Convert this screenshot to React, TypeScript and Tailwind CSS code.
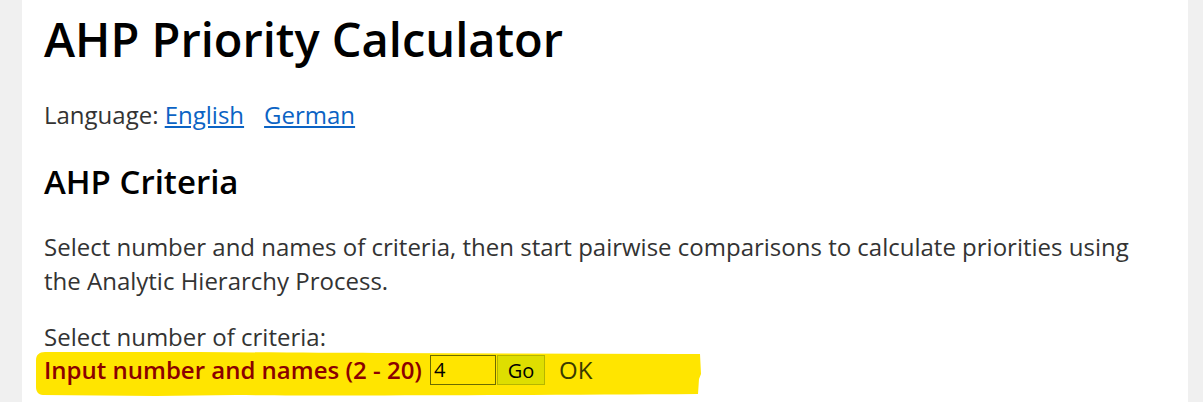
export default function App() {
  return (
    <div className="min-h-[402px] bg-[#f0f0f0] font-['Open_Sans',sans-serif]">
      <div className="ml-[22px] w-[1166px] min-h-[402px] bg-white pl-[22px] pr-[36px] text-[#333]">
        <h1 className="pt-[7px] text-[47px] leading-[64px] font-semibold text-black">
          AHP Priority Calculator
        </h1>
        <p className="mt-[27px] text-[24px] leading-[34px]">
          Language:{" "}
          <a href="#" className="text-[#0b63c4] underline">English</a>
          <span className="ml-5" />
          <a href="#" className="text-[#0b63c4] underline">German</a>
        </p>
        <h2 className="mt-[28px] text-[33px] leading-[44px] font-semibold text-black">
          AHP Criteria
        </h2>
        <p className="mt-[26px] text-[24px] leading-[34px]">
          Select number and names of criteria, then start pairwise comparisons to calculate priorities using
          the Analytic Hierarchy Process.
        </p>
        <p className="mt-[22px] text-[24px] leading-[33px]">Select number of criteria:</p>
        <div className="relative">
          <svg
            className="absolute left-[-8px] top-[-1px]"
            width="666"
            height="45"
            viewBox="0 0 666 45"
          >
            <path
              d="M9 0 C120 -1 250 1 340 1 L640 2 L664 2 L665 22 L663 27 L662 42 C500 43 300 44 200 43 L120 44 L7 43 C2 43 0 39 0 35 L0 8 C0 3 3 0 9 0 Z"
              fill="#ffe500"
            />
          </svg>
          <div className="relative flex items-center h-[33px] text-[24px]">
            <span className="font-semibold text-[#8b0000]">Input number and names (2 - 20)</span>
            <input
              defaultValue="4"
              className="ml-[8px] h-[30px] w-[66px] border border-[#6b6b00] bg-transparent px-[3px] text-[20px] text-black outline-none"
            />
            <button className="ml-px h-[30px] w-[48px] border border-[#b5b500] bg-[#dede00] text-[20px] text-black">
              Go
            </button>
            <span className="ml-[14px] text-[#3a3a00]">OK</span>
          </div>
        </div>
      </div>
    </div>
  );
}
